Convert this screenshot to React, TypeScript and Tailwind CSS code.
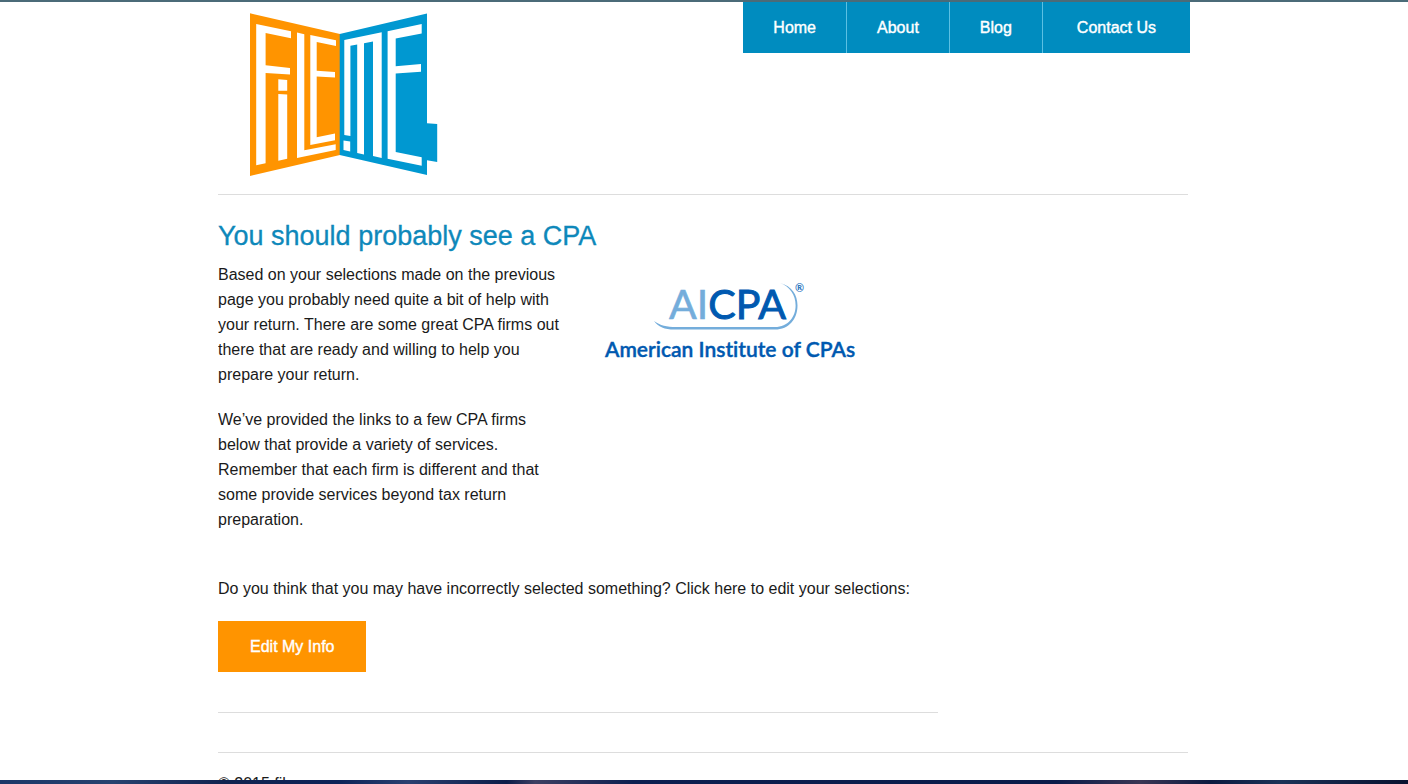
const navItems = ['Home', 'About', 'Blog', 'Contact Us'];

function FileMeLogo() {
  return (
    <svg viewBox="249 12 190 166" className="h-[166px] w-[190px]" role="img" aria-label="File.me">
      <path fill="#ff9400" d="M250 13.3 340 34V155L250 176Z" />
      <path fill="#0098d1" d="M339.7 34 427 13.5V123.3L437.2 124V162L427 160.3V175L339.7 155Z" />
      <g fill="#fff">
        <path d="M256.2 24 291 31.3V38.2L265.6 33V65.2L290 68V74.6L265.6 73V163.3L256.2 165.3Z" />
        <path d="M278.3 79.3 287.2 80V90.8H278.3ZM278.3 94 287.2 94.6V158.7L278.3 160.8Z" />
        <path d="M297 32.6 304.3 34.2V150.3L335.7 144.2V150L297 158Z" />
        <path d="M310.3 35 336 40.2V46L316.7 42V70.8L335 72V77.5L316.7 76.4V137.2L335 133.6V140.3L310.3 145Z" />
        <path d="M344.3 40 381.7 32.3V158L373 156V41.4L364 43.2V154.4L357.2 153V44.4L350.4 45.8V136L344.3 135Z" />
        <path d="M343.5 140.5 350.2 141.5V151.4L343.5 150Z" />
        <path d="M387.6 31.2 421.7 24V33.6L395.7 38.4V66.2L421 64V71.7L395.7 73.4V152L421.7 157.2V165.8L387.6 158.8Z" />
      </g>
    </svg>
  );
}

function AicpaLogo() {
  return (
    <svg
      viewBox="598 270 264 100"
      className="h-[100px] w-[264px]"
      role="img"
      aria-label="AICPA, American Institute of CPAs"
    >
      <path
        fill="#74addb"
        d="M654 321C660 325.500 667 327 676 327H775C788 327 795.600 317 795.600 305.500C795.600 295 790 286.500 780 283C792 286 797.500 295 797.500 305.500C797.500 319 789 329.500 775 329.500H674C665 329.500 658 327 654 321Z"
      />
      <text x="669" y="319" fontSize="41" className="font-['Lato',sans-serif]" fill="#0059b0">
        <tspan fill="#74addb" stroke="#74addb" strokeWidth="0.6">AI</tspan>
        <tspan stroke="#0059b0" strokeWidth="1">CPA</tspan>
      </text>
      <text x="795" y="292" fontSize="11" className="font-['Lato',sans-serif] font-bold" fill="#2f78bf">®</text>
      <text
        x="605"
        y="357"
        fontSize="21"
        className="font-['Lato',sans-serif] font-semibold [font-variant-ligatures:none]"
        fill="#0059b0"
        stroke="#0059b0"
        strokeWidth="0.4"
      >
        American Institute of CPAs
      </text>
    </svg>
  );
}

export default function App() {
  return (
    <div className="flex h-screen flex-col overflow-hidden border-t-2 border-[#4b6b78] bg-white font-['Liberation_Sans',Arial,sans-serif] text-base leading-[25px] text-[#1a1a1a]">
      <div className="mx-auto min-h-0 w-full max-w-[972px] flex-1 overflow-hidden">
        <header className="mr-0.5 flex items-start justify-between border-b border-[#dddddd] pb-4 pl-[31px]">
          <a href="#home" className="mt-2.5">
            <FileMeLogo />
          </a>
          <nav className="-mr-0.5 flex divide-x divide-[#5cc0e3] bg-[#008cbf]">
            {navItems.map((item) => (
              <a
                key={item}
                href="#"
                className="px-[30px] py-[13px] text-white [-webkit-text-stroke:0.4px_white] last:px-[34px]"
              >
                {item}
              </a>
            ))}
          </nav>
        </header>

        <main>
          <h1 className="mt-[25px] text-[27px] leading-8 text-[#0e88ba] [-webkit-text-stroke:0.3px_#0e88ba]">
            You should probably see a CPA
          </h1>
          <div className="mt-2.5 flex gap-9">
            <div className="flex w-[344px] flex-col gap-5">
              <p>
                Based on your selections made on the previous page you probably need quite a bit of help with your
                return. There are some great CPA firms out there that are ready and willing to help you prepare your
                return.
              </p>
              <p>
                We’ve provided the links to a few CPA firms below that provide a variety of services. Remember that
                each firm is different and that some provide services beyond tax return preparation.
              </p>
            </div>
            <a href="#aicpa" className="mt-2">
              <AicpaLogo />
            </a>
          </div>
          <p className="mt-11">
            Do you think that you may have incorrectly selected something? Click here to edit your selections:
          </p>
          <button
            type="button"
            className="mt-5 bg-[#ff9400] px-8 py-[13px] text-white [-webkit-text-stroke:0.4px_white]"
          >
            Edit My Info
          </button>
          <hr className="mt-10 max-w-[720px] border-[#dddddd]" />
        </main>

        <footer className="mr-0.5 mt-[39px] border-t border-[#dddddd] pt-[18px]">
          <p>© 2015 file.me</p>
        </footer>
      </div>
      <div className="h-1 shrink-0 bg-[linear-gradient(90deg,#1b3768,#27426f_8%,#10224f_16%,#0d2358_24%,#2a4070_29%,#0c1d49_36%,#3d3f62_38%,#0c1f50_45%,#0a1b49_75%,#3a3654_81%,#0b1a40_86%,#1b3257_91%,#08112f)]" />
    </div>
  );
}
